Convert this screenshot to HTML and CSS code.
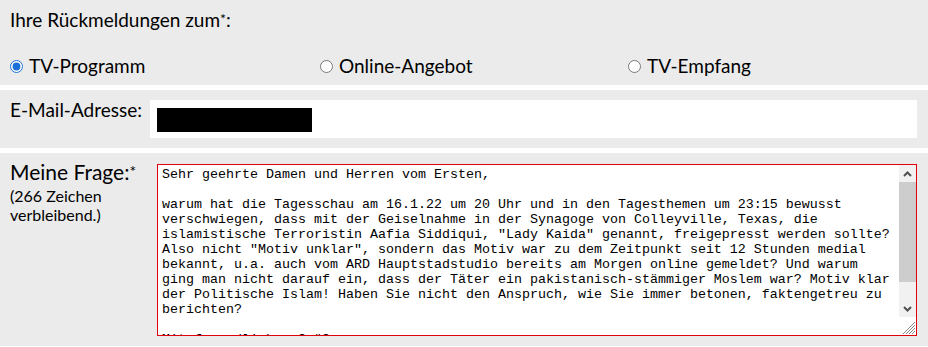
FILE: index.html
```html
<!DOCTYPE html>
<html lang="de">
<head>
    <meta charset="UTF-8">
    <meta name="viewport" content="width=device-width, initial-scale=1.0">
    <title>Kontakt - Das Erste</title>
    <link rel="stylesheet" href="styles.css">
</head>
<body>

<form class="kontakt">
    <div class="section auswahl">
        <div class="legend">Ihre Rückmeldungen zum<sup>*</sup>:</div>
        <div class="options">
            <label class="option"><input type="radio" name="thema" checked> TV-Programm</label>
            <label class="option"><input type="radio" name="thema"> Online-Angebot</label>
            <label class="option"><input type="radio" name="thema"> TV-Empfang</label>
        </div>
    </div>

    <div class="section row">
        <label class="lbl">E-Mail-Adresse:</label>
        <div class="field email"><span class="redacted"></span></div>
    </div>

    <div class="section row frage">
        <div class="lbl">
            <span class="big">Meine Frage:<sup>*</sup></span>
            <span class="hint">(266 Zeichen verbleibend.)</span>
        </div>
        <div class="message-box">
            <textarea class="message" spellcheck="false">Sehr geehrte Damen und Herren vom Ersten,

warum hat die Tagesschau am 16.1.22 um 20 Uhr und in den Tagesthemen um 23:15 bewusst
verschwiegen, dass mit der Geiselnahme in der Synagoge von Colleyville, Texas, die
islamistische Terroristin Aafia Siddiqui, "Lady Kaida" genannt, freigepresst werden sollte?
Also nicht "Motiv unklar", sondern das Motiv war zu dem Zeitpunkt seit 12 Stunden medial
bekannt, u.a. auch vom ARD Hauptstadstudio bereits am Morgen online gemeldet? Und warum
ging man nicht darauf ein, dass der Täter ein pakistanisch-stämmiger Moslem war? Motiv klar
der Politische Islam! Haben Sie nicht den Anspruch, wie Sie immer betonen, faktengetreu zu
berichten?

Mit freundlichen Grüßen</textarea>
            <!-- Scrollbar nachgebaut -->
            <div class="scrollbar">
                <div class="sb-btn">
                    <svg width="9" height="6" viewBox="0 0 9 6"><path d="M1 5 L4.5 1.5 L8 5" fill="none" stroke="#505050" stroke-width="2"/></svg>
                </div>
                <div class="sb-track"><div class="sb-thumb"></div></div>
                <div class="sb-btn">
                    <svg width="9" height="6" viewBox="0 0 9 6"><path d="M1 1 L4.5 4.5 L8 1" fill="none" stroke="#505050" stroke-width="2"/></svg>
                </div>
                <div class="sb-corner">
                    <svg width="16" height="16" viewBox="0 0 16 16">
                        <path d="M15 3 L3 15 M15 6 L6 15 M15 9 L9 15 M15 12 L12 15" stroke="#8a8a8a" stroke-width="1"/>
                    </svg>
                </div>
            </div>
        </div>
    </div>
</form>

</body>
</html>
```

FILE: styles.css
```css
body {
    margin: 0;
    padding: 0;
    background-color: #ffffff;
    font-family: Lato, "Open Sans", sans-serif;
    color: #000;
}
.section {
    background-color: #ebebeb;
    margin-bottom: 5px;
}
.section sup {
    font-size: 0.75em;
    vertical-align: top;
    position: relative;
    top: -1px;
}
.auswahl {
    padding: 8px 10px 7px 10px;
    height: 70px;
}
.legend {
    font-size: 19px;
    line-height: 24px;
}
.options {
    display: grid;
    grid-template-columns: 310px 308px 1fr;
    margin-top: 22px;
}
.option {
    font-size: 19px;
    line-height: 24px;
    display: flex;
    align-items: center;
    gap: 6px;
}
.option input {
    margin: 0;
    width: 13px;
    height: 13px;
    accent-color: #1a6fd8;
}
.row {
    display: grid;
    grid-template-columns: 140px 1fr;
    padding: 10px 11px 10px 10px;
}
.lbl {
    font-size: 19px;
    line-height: 24px;
    margin-top: -2px;
}
.field {
    background-color: #fff;
    height: 38px;
    box-sizing: border-box;
    padding: 8px 7px;
}
.redacted {
    display: block;
    width: 155px;
    height: 24px;
    background-color: #000;
}
.frage {
    padding-top: 11px;
    padding-bottom: 10px;
}
.frage .lbl {
    margin-top: -5px;
}
.big {
    display: block;
    font-size: 21px;
    line-height: 26px;
}
.hint {
    display: block;
    font-size: 16px;
    line-height: 19px;
    width: 100px;
    margin-top: 1px;
}
.message-box {
    margin-left: 7px;
    height: 172px;
    box-sizing: border-box;
    border: 1px solid #e2000f;
    background: #fff;
    display: flex;
}
.message {
    flex: 1;
    border: none;
    outline: none;
    margin: 0;
    padding: 2px 4px;
    font-family: "Courier New", "Nimbus Mono PS", FreeMono, "Liberation Mono", monospace;
    font-size: 13.33px;
    line-height: 15px;
    color: #000;
    background: #fff;
    resize: none;
    overflow: hidden;
}
.scrollbar {
    width: 17px;
    display: flex;
    flex-direction: column;
}
.sb-btn {
    height: 17px;
    background-color: #f1f1f1;
    display: flex;
    align-items: center;
    justify-content: center;
}
.sb-track {
    flex: 1;
    background-color: #f1f1f1;
}
.sb-thumb {
    height: 100px;
    background-color: #cdcdcd;
}
.sb-corner {
    height: 18px;
    background-color: #fff;
    display: flex;
    align-items: flex-end;
    justify-content: flex-end;
}
```
